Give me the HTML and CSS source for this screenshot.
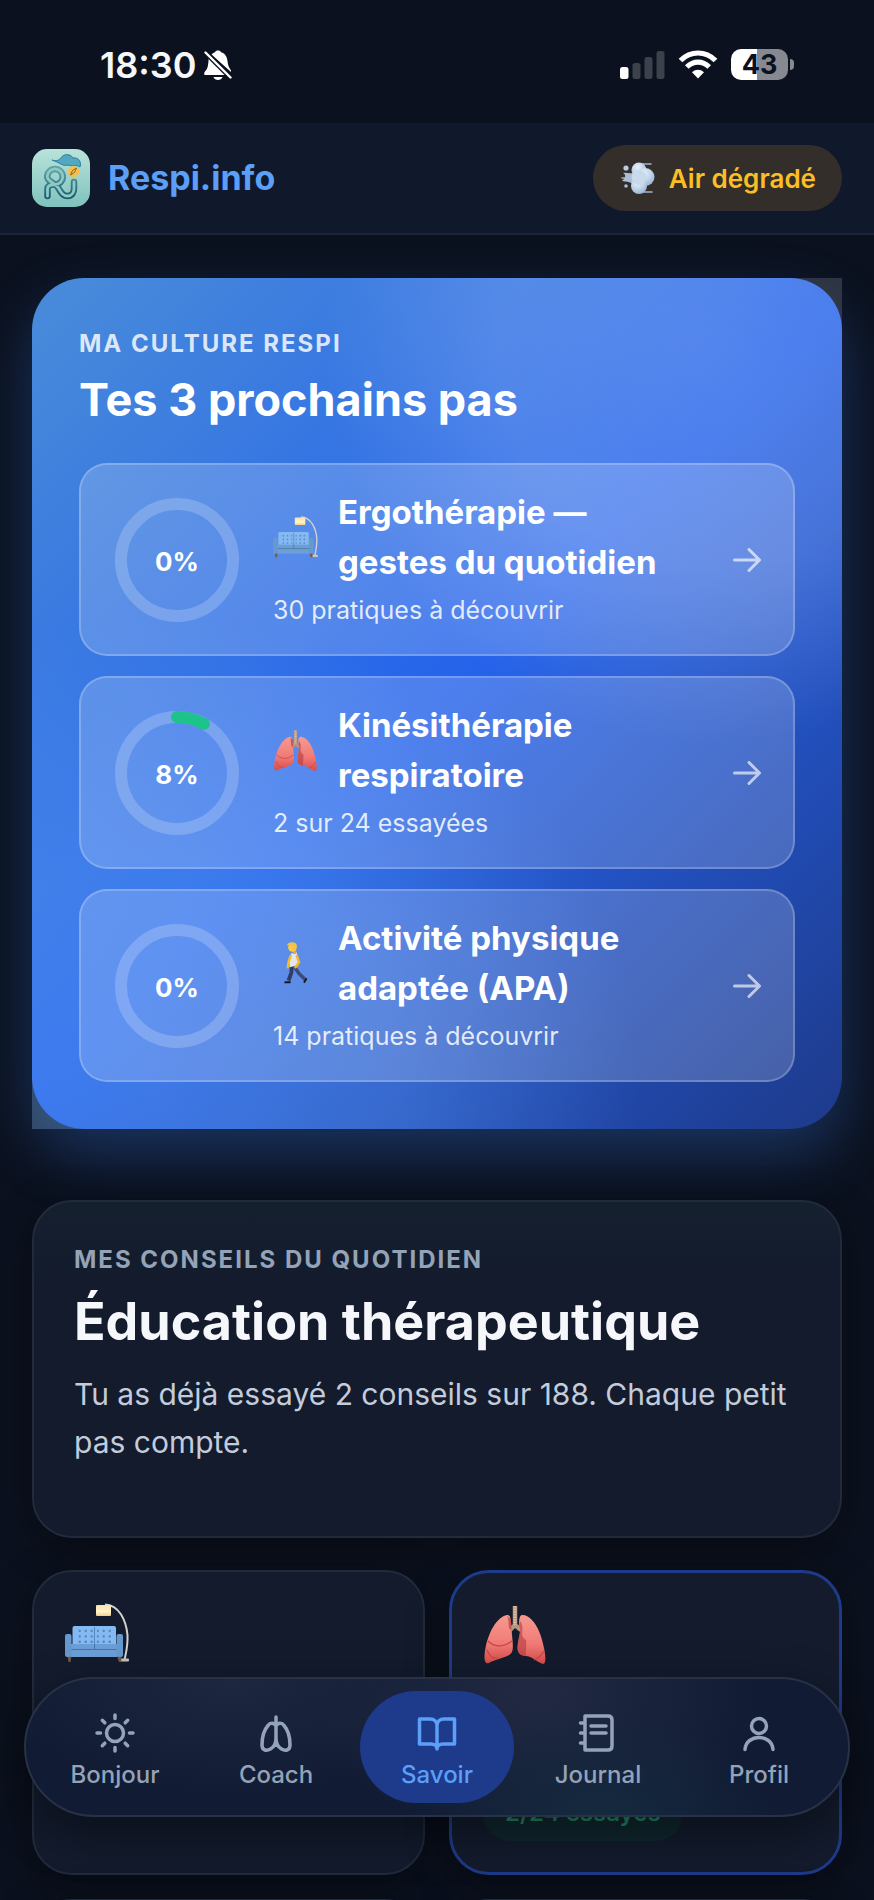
FILE: index.html
```
<!DOCTYPE html>
<html lang="fr">
<head>
<meta charset="utf-8">
<meta name="viewport" content="width=device-width, initial-scale=1">
<title>Respi.info — Savoir</title>
<link rel="stylesheet" href="styles.css">
</head>
<body>
<svg class="defs" aria-hidden="true">
  <defs>
    <linearGradient id="lungFill" x1="0" y1="0" x2="0" y2="1"><stop offset="0" stop-color="#f79a90"/><stop offset=".6" stop-color="#f07a76"/><stop offset="1" stop-color="#d94c49"/></linearGradient>
    <linearGradient id="shade" x1="0" y1="0" x2="0" y2="1"><stop offset="0" stop-color="#fbe3a4"/><stop offset=".6" stop-color="#fff3cf"/><stop offset="1" stop-color="#f3cf86"/></linearGradient>
    <radialGradient id="puff" cx=".4" cy=".3" r=".7"><stop offset="0" stop-color="#e6f1fb"/><stop offset=".6" stop-color="#bed2e8"/><stop offset="1" stop-color="#9db4d1"/></radialGradient>
    <linearGradient id="logoBg" x1="0" y1="0" x2="0" y2="1"><stop offset="0" stop-color="#b9e3da"/><stop offset="1" stop-color="#7fc2bd"/></linearGradient>
    <linearGradient id="logoLine" x1="0" y1="0" x2="0" y2="1"><stop offset="0" stop-color="#5fa3a5"/><stop offset="1" stop-color="#1d5c74"/></linearGradient>
    <pattern id="tufts" width="6" height="5.4" patternUnits="userSpaceOnUse" x="12" y="25.5"><rect x="1.6" y="1.4" width="2.2" height="2.2" rx=".6" fill="#4f86bd"/></pattern>
  </defs>
  <symbol id="sofa" viewBox="0 0 64 60">
    <path d="M40 1.500C54 2 61 17 62.500 32 63 43 61 50 59.500 57" fill="none" stroke="#d2d2d2" stroke-width="2"/>
    <rect x="31" y="2" width="15" height="11" rx="1" fill="url(#shade)"/>
    <rect x="55" y="55.500" width="9" height="3" rx="1" fill="#cbc5bd"/>
    <path d="M2.500 53H6.500L5.500 59H3.500ZM52 53H56L56.500 59H54Z" fill="#7a563c"/>
    <rect x="7.500" y="23" width="43.500" height="20" rx="2" fill="#84b9f2"/>
    <path d="M11 26H28V41H11ZM32 26H49V41H32Z" fill="url(#tufts)"/>
    <path d="M29.500 24V42" stroke="#4777ad" stroke-width=".8"/>
    <rect x="6" y="41" width="46" height="13" fill="#6c9fd6"/>
    <path d="M6 46.500H52M29.500 41V46.500" stroke="#446f9f" stroke-width=".9"/>
    <rect x="0" y="31" width="6.500" height="23" rx="2" fill="#6699d0"/>
    <rect x="51.500" y="31" width="6.500" height="23" rx="2" fill="#6699d0"/>
  </symbol>
  <symbol id="lungs" viewBox="0 0 64 60">
    <path d="M32 2V22M32 21L27 26M32 21L38 26" fill="none" stroke="#b8937e" stroke-width="4.500"/>
    <path d="M32 2V21" stroke="#dcbda9" stroke-width="3" stroke-dasharray="1.600 1"/>
    <path d="M24 11C28 10 28 17 28.500 25 29 34 31 43 29 48 26 54 12 55 6 59 1 61 1 53 2 47 5 28 14 13 24 11Z" fill="url(#lungFill)"/>
    <path d="M40 11C36 10 36 17 36 22 39 25 35 35 34.500 43 34 50 39 52 43 52 51 53 53 58 60 60 64 60 62 49 61 44 58 27 50 12 40 11Z" fill="url(#lungFill)"/>
    <path d="M5 37C13 45 23 42 29 37M4 46C7 54 11 54 15 55M61 47C58 53 55 54 51 56" fill="none" stroke="#c94744" stroke-width="1.200"/>
    <path d="M37 17C43 24 35 31 43 36 44 42 42 47 43 52 37 52 34 48 35 43 35 34 39 25 36 22Z" fill="#b53b40" opacity=".6"/>
    <path d="M24 12C27 16 24 25 28.500 26L28 15Z" fill="#b53b40" opacity=".7"/>
  </symbol>
  <symbol id="walker" viewBox="0 0 64 60">
    <path d="M27 34 26 44 22 55" fill="none" stroke="#303b66" stroke-width="5.500" stroke-linejoin="round"/>
    <path d="M30 35 37 45 46 54" fill="none" stroke="#3d4a7c" stroke-width="5" stroke-linejoin="round"/>
    <path d="M16 58 17 56H25V59H16ZM43 57 47 51 49 53 45 59Z" fill="#15161a"/>
    <path d="M26 16 34 15 36 33 24 36 23 29Z" fill="#e4e8ee"/>
    <path d="M25 20 22 29 21 36M34 20 37 29 32 36" fill="none" stroke="#f7b928" stroke-width="3.500" stroke-linecap="round"/>
    <path d="M29 11H33V17H28Z" fill="#eda81f"/>
    <circle cx="27.500" cy="8" r="6" fill="#ffcb3d"/>
    <path d="M20 5C20 0 33-2 34 5 34 10 32 12 31 13L29 6Z" fill="#f3c24b"/>
  </symbol>
  <symbol id="arrow" viewBox="0 0 28 24">
    <path d="M1.500 12H26M16 1.500 26.500 12 16 22.500" fill="none" stroke="currentColor" stroke-width="3" stroke-linecap="round" stroke-linejoin="round"/>
  </symbol>
</svg>

<div class="app">
  <div class="statusbar">
    <div class="status-left">
      <span class="clock">18:30</span>
      <svg class="bell" viewBox="0 0 28 30" aria-label="Silencieux">
        <path d="M5 5.500 25 25H1.500C-.5 25 0 22.500 1 21.500 4 18.500 4 15 4.500 11 4.700 8.500 5 7 5 5.500ZM7.500 4.500C9 3 10 2.500 11 2.200 11.500 0 16.500 0 17 2.200 21.500 3.500 23 7 23.500 11 24 15 24.500 17 27 20.500V22ZM9.500 27H18.500C17.500 31 10.500 31 9.500 27Z" fill="#fff"/>
        <path d="M1.500 2.500 26.500 27.500" stroke="#0b111e" stroke-width="5"/>
        <path d="M1.500 2.500 26.500 27.500" stroke="#fff" stroke-width="2.400" stroke-linecap="round"/>
      </svg>
    </div>
    <div class="status-right">
      <svg class="signal" viewBox="0 0 45 28" aria-hidden="true">
        <rect x="0" y="16" width="8.500" height="12" rx="2.500" fill="#fff"/>
        <g fill="#3d414c"><rect x="12.500" y="12" width="8" height="16" rx="2.500"/><rect x="24.500" y="6" width="8" height="22" rx="2.500"/><rect x="36.500" y="0" width="8" height="28" rx="2.500"/></g>
      </svg>
      <svg class="wifi" viewBox="0 0 40 30" aria-hidden="true">
        <g fill="none" stroke="#fff" stroke-width="5.200"><path d="M2.500 10.500C12.500.5 27.500.5 37.500 10.500"/><path d="M8.800 17C15.500 10.500 24.500 10.500 31.200 17"/></g>
        <path d="M14 22.300C17.500 19 22.500 19 26 22.300L20 28.500Z" fill="#fff"/>
      </svg>
      <span class="battery"><span class="battery-body">43</span><span class="battery-tip"></span></span>
    </div>
  </div>

  <header class="header">
    <a class="brand" href="#">
      <svg class="logo" viewBox="0 0 58 58" aria-hidden="true">
        <rect width="58" height="58" rx="15" fill="url(#logoBg)"/>
        <g fill="none" stroke-linecap="round" stroke-linejoin="round">
          <path d="M15.500 47V40C15.500 36 19 35.500 23 35.500A7.800 7.800 0 1 0 15.200 27.700C15.500 33 23 33.500 26 38.500 29 43.500 31 47 35.500 47 40 47 42 43.500 42 39.500V33" stroke="url(#logoLine)" stroke-width="6.500"/>
          <path d="M15.500 47V40C15.500 36 19 35.500 23 35.500A7.800 7.800 0 1 0 15.200 27.700C15.500 33 23 33.500 26 38.500 29 43.500 31 47 35.500 47 40 47 42 43.500 42 39.500V33" stroke="#8ccac3" stroke-width="2.800"/>
        </g>
        <path d="M20 11C24 13 27 11 29 9 31 5 38 4 41 9 46 8 50 13 48 18 44 15 40 18 36 16 31 18 27 13 20 11Z" fill="#52a9bf" stroke="#2b7f9b" stroke-width="1"/>
        <circle cx="41.500" cy="22.500" r="5.800" fill="#f5bf4f"/>
        <path d="M38.500 26 40.500 21.500 44.500 19 42.500 23.500Z" fill="none" stroke="#8f6519" stroke-width="1"/>
      </svg>
      <span>Respi.info</span>
    </a>
    <button class="air" type="button">
      <svg class="air-icon" viewBox="0 0 34 34" aria-hidden="true">
        <g fill="none" stroke="#9fb4cf" stroke-width="1.600" stroke-linecap="round"><path d="M20 3H30M20 31H31M1 17H8"/></g>
        <path d="M14 11C9 14 6 11 2 12 5 13 5 17 1 20 6 21 9 20 14 25Z" fill="#a9bdd6"/>
        <circle cx="5" cy="7" r="2.600" fill="#b9cce2"/><circle cx="5" cy="25" r="1.800" fill="#a9bdd6"/>
        <circle cx="18" cy="9" r="7.500" fill="url(#puff)"/><circle cx="24.500" cy="16" r="9" fill="url(#puff)"/><circle cx="18" cy="25" r="8" fill="url(#puff)"/><circle cx="18" cy="16.500" r="7.500" fill="#c9daec"/>
      </svg>
      <span>Air dégradé</span>
    </button>
  </header>

  <main class="content">
    <section class="hero-frame">
      <div class="hero">
        <p class="eyebrow eyebrow-light">MA CULTURE RESPI</p>
        <h2 class="hero-title">Tes 3 prochains pas</h2>
        <div class="steps">
          <a class="step" href="#">
            <span class="ring">
              <svg viewBox="0 0 124 124" aria-hidden="true"><circle class="track" cx="62" cy="62" r="56"/></svg>
              <span class="ring-value">0%</span>
            </span>
            <span class="step-body">
              <span class="step-head"><svg class="step-icon" aria-hidden="true"><use href="#sofa"/></svg><span class="step-title">Ergothérapie — gestes du quotidien</span></span>
              <span class="step-sub">30 pratiques à découvrir</span>
            </span>
            <svg class="arrow" aria-hidden="true"><use href="#arrow"/></svg>
          </a>
          <a class="step" href="#">
            <span class="ring">
              <svg viewBox="0 0 124 124" aria-hidden="true"><circle class="track" cx="62" cy="62" r="56"/><circle class="progress" cx="62" cy="62" r="56" pathLength="100" stroke-dasharray="8 92"/></svg>
              <span class="ring-value">8%</span>
            </span>
            <span class="step-body">
              <span class="step-head"><svg class="step-icon" aria-hidden="true"><use href="#lungs"/></svg><span class="step-title">Kinésithérapie respiratoire</span></span>
              <span class="step-sub">2 sur 24 essayées</span>
            </span>
            <svg class="arrow" aria-hidden="true"><use href="#arrow"/></svg>
          </a>
          <a class="step" href="#">
            <span class="ring">
              <svg viewBox="0 0 124 124" aria-hidden="true"><circle class="track" cx="62" cy="62" r="56"/></svg>
              <span class="ring-value">0%</span>
            </span>
            <span class="step-body">
              <span class="step-head"><svg class="step-icon" aria-hidden="true"><use href="#walker"/></svg><span class="step-title">Activité physique adaptée (APA)</span></span>
              <span class="step-sub">14 pratiques à découvrir</span>
            </span>
            <svg class="arrow" aria-hidden="true"><use href="#arrow"/></svg>
          </a>
        </div>
      </div>
    </section>

    <section class="card intro">
      <p class="eyebrow">MES CONSEILS DU QUOTIDIEN</p>
      <h1 class="intro-title">Éducation thérapeutique</h1>
      <p class="intro-text">Tu as déjà essayé 2 conseils sur 188. Chaque petit pas compte.</p>
    </section>

    <section class="tiles">
      <a class="card tile" href="#"><svg class="tile-icon" aria-label="Ergothérapie"><use href="#sofa"/></svg></a>
      <a class="card tile tile-active" href="#"><svg class="tile-icon" aria-label="Kinésithérapie"><use href="#lungs"/></svg><span class="badge">2/24 essayés</span></a>
      <a class="card tile" href="#" aria-label="Activité physique"></a>
      <a class="card tile" href="#" aria-label="Autres conseils"></a>
    </section>
  </main>

  <nav class="tabbar">
    <a class="tab" href="#">
      <svg class="tab-icon" viewBox="0 0 40 40" aria-hidden="true"><circle cx="20" cy="20" r="8.500"/><path d="M20 2V5.500M20 34.500V38M2 20H5.500M34.500 20H38M7.300 7.300 9.800 9.800M30.200 30.200 32.700 32.700M7.300 32.700 9.800 30.200M30.200 9.800 32.700 7.300"/></svg>
      <span>Bonjour</span>
    </a>
    <a class="tab" href="#">
      <svg class="tab-icon" viewBox="0 0 40 40" aria-hidden="true"><path d="M20 4V25M20 13C18 9.500 14 9.500 12 12.500 8 17 6 25 6 32 6 38 11 38 14.500 36 18 34 20 31 20 25 20 31 22 34 25.500 36 29 38 34 38 34 32 34 25 32 17 28 12.500 26 9.500 22 9.500 20 13"/></svg>
      <span>Coach</span>
    </a>
    <a class="tab tab-active" href="#" aria-current="page">
      <svg class="tab-icon" viewBox="0 0 40 40" aria-hidden="true"><path d="M2.500 6H13C17 6 20 8.500 20 12.500V36C20 33 17.500 31 14 31H2.500ZM37.500 6H27C23 6 20 8.500 20 12.500V36C20 33 22.500 31 26 31H37.500Z"/></svg>
      <span>Savoir</span>
    </a>
    <a class="tab" href="#">
      <svg class="tab-icon" viewBox="0 0 40 40" aria-hidden="true"><path d="M7 3H30C32.500 3 34 4.500 34 7V33C34 35.500 32.500 37 30 37H7ZM2.500 10H7M2.500 20H7M2.500 30H7M13 13H28M13 20H28"/></svg>
      <span>Journal</span>
    </a>
    <a class="tab" href="#">
      <svg class="tab-icon" viewBox="0 0 40 40" aria-hidden="true"><circle cx="20" cy="13" r="7.500"/><path d="M6 36.500C7 20.500 33 20.500 34 36.500"/></svg>
      <span>Profil</span>
    </a>
  </nav>
</div>
</body>
</html>
```
FILE: styles.css
```
* { box-sizing: border-box; margin: 0; padding: 0; }
body { background: #0a101c; color: #f6f7fb; font-family: Inter, "Liberation Sans", sans-serif; }
a { color: inherit; text-decoration: none; }
button { font: inherit; border: 0; }
.defs { position: absolute; width: 0; height: 0; }
.app { position: relative; height: 100vh; overflow: hidden; background: #0b111e; }

.statusbar { display: flex; justify-content: space-between; align-items: center; height: 123px; padding: 6px 80px 0 100px; }
.status-left { display: flex; align-items: center; gap: 8px; }
.clock { font-size: 36px; font-weight: 600; line-height: 44px; }
.bell { width: 28px; height: 30px; }
.status-right { display: flex; align-items: center; gap: 13px; }
.signal { width: 45px; height: 28px; }
.wifi { width: 40px; height: 30px; }
.battery { display: flex; align-items: center; gap: 2px; }
.battery-body { width: 57px; height: 31px; border-radius: 10px; background: linear-gradient(90deg, #fff 45%, #868991 45%); color: #0b111e; font-size: 27px; font-weight: 700; line-height: 31px; text-align: center; }
.battery-tip { width: 4px; height: 11px; border-radius: 0 5px 5px 0; background: #868991; }

.header { display: flex; justify-content: space-between; align-items: center; height: 112px; padding: 0 32px; background: #10192b; border-bottom: 2px solid #1a2438; }
.brand { display: flex; align-items: center; gap: 18px; color: #5b9ff8; font-size: 34px; font-weight: 700; line-height: 44px; }
.logo { width: 58px; height: 58px; }
.air { display: flex; align-items: center; gap: 14px; height: 66px; padding: 0 26px 0 28px; border-radius: 33px; background: #342e2a; color: #fbbf24; font-size: 26px; font-weight: 600; }
.air-icon { width: 34px; height: 34px; }

.content { display: flex; flex-direction: column; padding: 43px 32px 0; }
.hero-frame {
  margin-bottom: 71px;
  background: linear-gradient(#2e333f, #2e333f) right top / 52px 52px no-repeat, linear-gradient(#32465c, #32465c) left bottom / 52px 52px no-repeat;
}
.hero {
  padding: 49px 47px 47px;
  border-radius: 52px;
  background:
    radial-gradient(circle 390px at 84% 9%, rgba(255, 255, 255, .2), rgba(255, 255, 255, .16) 55%, transparent),
    radial-gradient(circle 480px at 16% 96%, rgba(130, 190, 250, .28), rgba(130, 190, 250, .22) 50%, transparent),
    linear-gradient(135deg, #4a8cd9 0%, #2563eb 50%, #1e3a8a 100%);
  box-shadow: 0 26px 60px rgba(59, 130, 246, .3);
}
.eyebrow { color: #94a3b8; font-size: 24px; font-weight: 700; line-height: 34px; letter-spacing: 2px; }
.eyebrow-light { color: rgba(255, 255, 255, .82); }
.hero-title { margin: 10px 0 34px; color: #fff; font-size: 45px; font-weight: 700; line-height: 58px; }
.steps { display: flex; flex-direction: column; gap: 20px; }
.step { display: flex; align-items: center; gap: 34px; min-height: 193px; padding: 19px 32px 19px 34px; border: 2px solid rgba(255, 255, 255, .22); border-radius: 28px; background: rgba(255, 255, 255, .18); }
.ring { display: grid; flex: none; width: 124px; height: 124px; place-items: center; }
.ring svg { grid-area: 1 / 1; width: 124px; height: 124px; transform: rotate(-90deg); }
.ring circle { fill: none; stroke-width: 12px; }
.track { stroke: rgba(255, 255, 255, .2); }
.progress { stroke: #1ec28b; stroke-linecap: round; }
.ring-value { grid-area: 1 / 1; padding-top: 4px; color: #fff; font-size: 26px; font-weight: 700; }
.step-body { display: flex; flex: 1; flex-direction: column; }
.step-head { display: flex; align-items: center; gap: 20px; }
.step-icon { flex: none; width: 45px; height: 42px; }
.step-title { color: #fff; font-size: 33px; font-weight: 700; line-height: 50px; }
.step-sub { color: rgba(255, 255, 255, .85); font-size: 25px; line-height: 46px; }
.arrow { flex: none; width: 28px; height: 24px; color: rgba(255, 255, 255, .65); }

.card { border: 2px solid #212b3b; border-radius: 40px; background: #131b2d; box-shadow: 0 10px 40px rgba(0, 0, 0, .35); }
.intro { min-height: 338px; margin-bottom: 32px; padding: 41px 40px 40px; background: linear-gradient(#15202f, #131b2d 25%); }
.intro-title { margin: 12px 0 15px; font-size: 52px; font-weight: 700; line-height: 66px; }
.intro-text { color: #c3ccdb; font-size: 30px; line-height: 48px; }
.tiles { display: grid; grid-template-columns: 1fr 1fr; gap: 24px; }
.tile { display: flex; flex-direction: column; align-items: flex-start; justify-content: space-between; min-height: 305px; padding: 31px; }
.tile-active { border: 3px solid #1e3a8a; }
.tile-icon { width: 64px; height: 60px; }
.badge { display: block; padding: 0 22px; border-radius: 29px; background: #10272e; color: #21855f; font-size: 24px; font-weight: 600; line-height: 56px; }

.tabbar {
  position: absolute; right: 24px; bottom: 83px; left: 24px;
  display: grid; grid-template-columns: repeat(5, 1fr); gap: 7px;
  padding: 12px; border: 2px solid #273247; border-radius: 70px;
  background:
    radial-gradient(ellipse 180px 100px at 70% 100%, #152a3e, transparent),
    radial-gradient(ellipse 230px 150px at 62% 10%, #212a42, transparent),
    radial-gradient(ellipse 240px 120px at 25% 0%, #1d273f, transparent),
    #111b34;
  box-shadow: 0 16px 48px rgba(0, 0, 0, .45);
}
.tab { display: flex; flex-direction: column; align-items: center; gap: 7px; height: 112px; padding-top: 22px; border-radius: 56px; color: #94a3b8; font-size: 24px; font-weight: 500; line-height: 30px; }
.tab-icon { width: 40px; height: 40px; fill: none; stroke: currentColor; stroke-width: 3.500px; stroke-linecap: round; stroke-linejoin: round; }
.tab-active { background: #1e3a8a; color: #5b9ff8; }
```
